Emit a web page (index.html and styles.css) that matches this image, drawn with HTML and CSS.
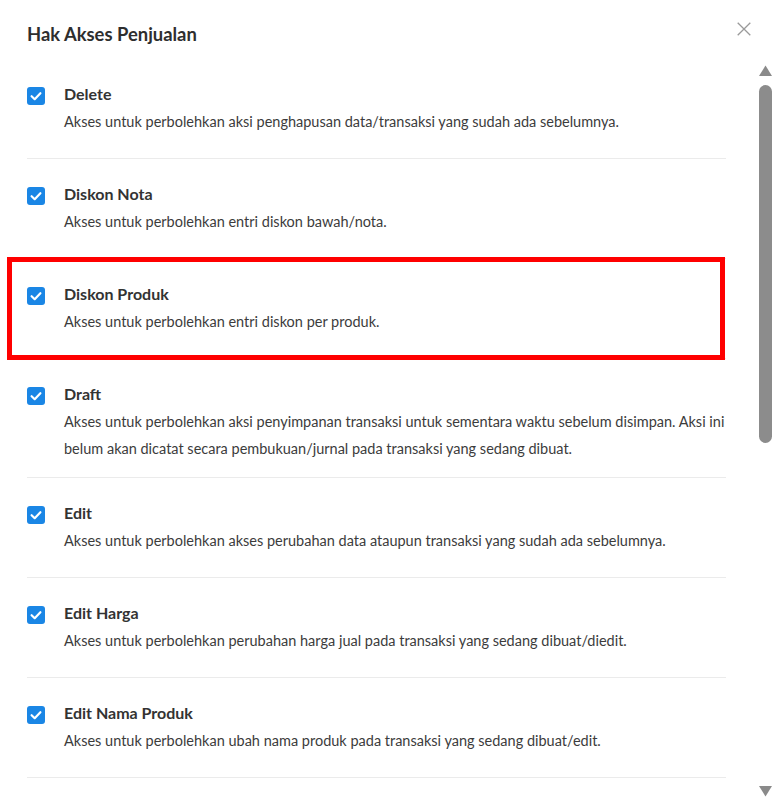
FILE: index.html
```html
<!DOCTYPE html>
<html lang="id">
<head>
<meta charset="utf-8">
<title>Hak Akses Penjualan</title>
<link rel="stylesheet" href="styles.css">
</head>
<body>
<div class="modal">
  <header class="modal-header">
    <h1 class="modal-title">Hak Akses Penjualan</h1>
    <button class="close-btn" aria-label="Tutup">
      <svg viewBox="0 0 14 14" width="14" height="14"><path d="M0.7 0.7 L13.3 13.3 M13.3 0.7 L0.7 13.3" stroke="#9a9a9a" stroke-width="1.3" fill="none"/></svg>
    </button>
  </header>
  <div class="modal-body">
    <ul class="perm-list">
      <li class="perm-item">
        <span class="checkbox"><svg viewBox="0 0 18 18" width="18" height="18"><path d="M4.6 9.2 L7.7 12.2 L13.4 6.2" stroke="#fff" stroke-width="2.2" fill="none" stroke-linecap="round" stroke-linejoin="round"/></svg></span>
        <div class="perm-text">
          <div class="perm-name">Delete</div>
          <div class="perm-desc">Akses untuk perbolehkan aksi penghapusan data/transaksi yang sudah ada sebelumnya.</div>
        </div>
      </li>
      <li class="perm-item">
        <span class="checkbox"><svg viewBox="0 0 18 18" width="18" height="18"><path d="M4.6 9.2 L7.7 12.2 L13.4 6.2" stroke="#fff" stroke-width="2.2" fill="none" stroke-linecap="round" stroke-linejoin="round"/></svg></span>
        <div class="perm-text">
          <div class="perm-name">Diskon Nota</div>
          <div class="perm-desc">Akses untuk perbolehkan entri diskon bawah/nota.</div>
        </div>
      </li>
      <li class="perm-item highlighted">
        <span class="checkbox"><svg viewBox="0 0 18 18" width="18" height="18"><path d="M4.6 9.2 L7.7 12.2 L13.4 6.2" stroke="#fff" stroke-width="2.2" fill="none" stroke-linecap="round" stroke-linejoin="round"/></svg></span>
        <div class="perm-text">
          <div class="perm-name">Diskon Produk</div>
          <div class="perm-desc">Akses untuk perbolehkan entri diskon per produk.</div>
        </div>
      </li>
      <li class="perm-item">
        <span class="checkbox"><svg viewBox="0 0 18 18" width="18" height="18"><path d="M4.6 9.2 L7.7 12.2 L13.4 6.2" stroke="#fff" stroke-width="2.2" fill="none" stroke-linecap="round" stroke-linejoin="round"/></svg></span>
        <div class="perm-text">
          <div class="perm-name">Draft</div>
          <div class="perm-desc">Akses untuk perbolehkan aksi penyimpanan transaksi untuk sementara waktu sebelum disimpan. Aksi ini belum akan dicatat secara pembukuan/jurnal pada transaksi yang sedang dibuat.</div>
        </div>
      </li>
      <li class="perm-item">
        <span class="checkbox"><svg viewBox="0 0 18 18" width="18" height="18"><path d="M4.6 9.2 L7.7 12.2 L13.4 6.2" stroke="#fff" stroke-width="2.2" fill="none" stroke-linecap="round" stroke-linejoin="round"/></svg></span>
        <div class="perm-text">
          <div class="perm-name">Edit</div>
          <div class="perm-desc">Akses untuk perbolehkan akses perubahan data ataupun transaksi yang sudah ada sebelumnya.</div>
        </div>
      </li>
      <li class="perm-item">
        <span class="checkbox"><svg viewBox="0 0 18 18" width="18" height="18"><path d="M4.6 9.2 L7.7 12.2 L13.4 6.2" stroke="#fff" stroke-width="2.2" fill="none" stroke-linecap="round" stroke-linejoin="round"/></svg></span>
        <div class="perm-text">
          <div class="perm-name">Edit Harga</div>
          <div class="perm-desc">Akses untuk perbolehkan perubahan harga jual pada transaksi yang sedang dibuat/diedit.</div>
        </div>
      </li>
      <li class="perm-item">
        <span class="checkbox"><svg viewBox="0 0 18 18" width="18" height="18"><path d="M4.6 9.2 L7.7 12.2 L13.4 6.2" stroke="#fff" stroke-width="2.2" fill="none" stroke-linecap="round" stroke-linejoin="round"/></svg></span>
        <div class="perm-text">
          <div class="perm-name">Edit Nama Produk</div>
          <div class="perm-desc">Akses untuk perbolehkan ubah nama produk pada transaksi yang sedang dibuat/edit.</div>
        </div>
      </li>
    </ul>
    <div class="scrollbar" aria-hidden="true">
      <svg class="sb-arrow" viewBox="0 0 13 11" width="13" height="11"><polygon points="6.5,0.5 13,11 0,11" fill="#8a8a8a"/></svg>
      <div class="sb-thumb"></div>
      <div class="sb-track"></div>
      <svg class="sb-arrow" viewBox="0 0 13 11" width="13" height="11"><polygon points="0,0 13,0 6.5,10.5" fill="#8a8a8a"/></svg>
    </div>
  </div>
</div>
</body>
</html>
```
FILE: styles.css
```css
html, body {
  margin: 0;
  padding: 0;
  background: #fff;
}
body {
  font-family: "Lato", "Noto Sans", "Liberation Sans", sans-serif;
  color: #333;
}
.modal {
  height: 802px;
  display: flex;
  flex-direction: column;
  overflow: hidden;
}
.modal-header {
  display: flex;
  justify-content: space-between;
  align-items: flex-start;
  height: 59px;
  padding: 0 25px 0 27px;
  box-sizing: border-box;
  flex: none;
}
.modal-title {
  margin: 0;
  padding-top: 22px;
  font-size: 18.4px;
  line-height: 24px;
  font-weight: 700;
  color: #2e2e2e;
}
.close-btn {
  margin-top: 22px;
  padding: 0;
  border: 0;
  background: none;
  width: 14px;
  height: 14px;
  display: flex;
}
.modal-body {
  height: 743px;
  flex: none;
  display: flex;
  padding-left: 7px;
}
.perm-list {
  list-style: none;
  margin: 0;
  padding: 0 0 0 20px;
  width: 719px;
  box-sizing: border-box;
  flex: none;
  overflow: hidden;
}
.perm-item {
  position: relative;
  display: flex;
  align-items: flex-start;
  min-height: 100px;
  box-sizing: border-box;
  padding: 23px 0 15px;
  border-bottom: 1px solid #ebebeb;
}
.highlighted::after {
  content: "";
  position: absolute;
  top: -2px;
  bottom: -2px;
  left: -20px;
  right: 1px;
  border: 5px solid #ff0000;
  pointer-events: none;
}
.checkbox {
  flex: none;
  width: 18px;
  height: 18px;
  margin-top: 5px;
  border-radius: 3px;
  background: #1a86e5;
  display: flex;
}
.perm-text {
  margin-left: 19px;
  flex: 1;
}
.perm-name {
  font-size: 16px;
  line-height: 24px;
  font-weight: 700;
  color: #333;
}
.perm-desc {
  margin-top: 2px;
  font-size: 14.5px;
  line-height: 27px;
  color: #3c3c3c;
}
.scrollbar {
  flex: none;
  width: 13px;
  height: 743px;
  box-sizing: border-box;
  margin-left: 33px;
  display: flex;
  flex-direction: column;
  align-items: center;
  padding: 6px 0 5px;
}
.sb-arrow {
  flex: none;
  display: block;
}
.sb-thumb {
  flex: none;
  width: 13px;
  height: 358px;
  margin-top: 9px;
  border-radius: 6.5px;
  background: #8c8c8c;
}
.sb-track {
  flex: 1;
}
```
